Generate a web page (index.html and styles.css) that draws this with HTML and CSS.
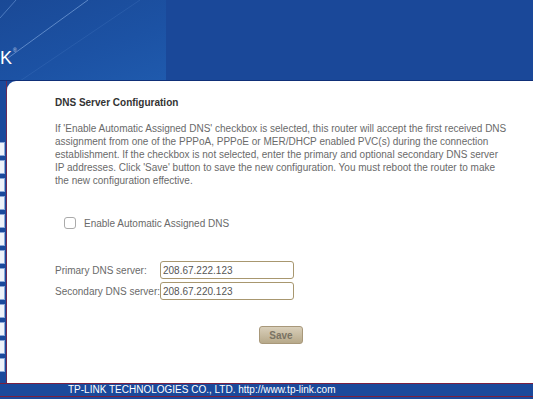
FILE: index.html
```html
<!DOCTYPE html>
<html lang="en">
<head>
    <meta charset="UTF-8">
    <title>DNS Server Configuration</title>
    <link rel="stylesheet" href="styles.css">
</head>
<body>
    <div class="header">
        <div class="logo">
            <svg class="swoosh" width="166" height="81" viewBox="0 0 166 81">
                <line x1="0" y1="18" x2="16" y2="0" stroke="#6f9ad8" stroke-width="1" opacity="0.6"/>
                <line x1="8" y1="58" x2="88" y2="0" stroke="#7aa3dc" stroke-width="1" opacity="0.7"/>
                <line x1="20" y1="81" x2="140" y2="0" stroke="#4f80c8" stroke-width="1" opacity="0.25"/>
            </svg>
            <span class="brand">K<sup>&reg;</sup></span>
        </div>
    </div>
    <div class="main">
        <div class="sidebar">
            <div class="item"></div><div class="item"></div><div class="item"></div>
            <div class="item"></div><div class="item"></div><div class="item"></div>
            <div class="item"></div><div class="item"></div><div class="item"></div>
            <div class="item"></div><div class="item"></div><div class="item"></div>
            <div class="item"></div>
        </div>
        <div class="panel">
            <h2>DNS Server Configuration</h2>
            <p class="info">If 'Enable Automatic Assigned DNS' checkbox is selected, this router will accept the first received DNS assignment from one of the PPPoA, PPPoE or MER/DHCP enabled PVC(s) during the connection establishment. If the checkbox is not selected, enter the primary and optional secondary DNS server IP addresses. Click 'Save' button to save the new configuration. You must reboot the router to make the new configuration effective.</p>
            <label class="check">
                <span class="box"></span>
                Enable Automatic Assigned DNS
            </label>
            <div class="fields">
                <div class="row">
                    <span class="name">Primary DNS server:</span>
                    <input type="text" value="208.67.222.123">
                </div>
                <div class="row">
                    <span class="name">Secondary DNS server:</span>
                    <input type="text" value="208.67.220.123">
                </div>
            </div>
            <div class="actions">
                <button type="button">Save</button>
            </div>
        </div>
    </div>
    <div class="footer">TP-LINK TECHNOLOGIES CO., LTD. http://www.tp-link.com</div>
</body>
</html>
```

FILE: styles.css
```css
body {
    margin: 0;
    background-color: #1b499b;
    font-family: "Liberation Sans", Arial, sans-serif;
    overflow: hidden;
}
.header {
    height: 81px;
    background-color: #1a4899;
    border-bottom: 1px solid #0f2f78;
    box-sizing: border-box;
}
.logo {
    position: relative;
    width: 166px;
    height: 80px;
    background: linear-gradient(160deg, #1a4996 0%, #1c52a4 60%, #1f5aad 100%);
    overflow: hidden;
}
.swoosh {
    position: absolute;
    left: 0;
    top: 0;
}
.brand {
    position: absolute;
    left: 0;
    top: 39px;
    color: #fff;
    font-size: 18px;
    line-height: 22px;
}
.brand sup {
    font-size: 5px;
    vertical-align: 12px;
    margin-left: 1px;
    color: #c8d6ee;
}
.main {
    display: flex;
    height: 302px;
}
.sidebar {
    width: 6px;
    padding-top: 61px;
    border-right: 1px solid #6b2a55;
}
.item {
    width: 4px;
    height: 12px;
    margin-bottom: 4px;
    background-color: #eef2fa;
    border: 1px solid #8aa6d8;
    border-left: none;
}
.panel {
    flex: 1;
    background-color: #fff;
    border-top-left-radius: 9px;
    padding: 16px 20px 0 48px;
    color: #6a6a6a;
    font-size: 10px;
}
h2 {
    margin: 0 0 14px 0;
    font-size: 10px;
    color: #333;
}
.info {
    margin: 0;
    line-height: 13px;
    width: 453px;
}
.check {
    display: flex;
    align-items: center;
    gap: 8px;
    height: 12px;
    margin: 30px 0 0 9px;
}
.box {
    width: 10px;
    height: 10px;
    border: 1px solid #aaa;
    border-radius: 3px;
    background: #fff;
}
.fields {
    margin-top: 31px;
}
.row {
    display: flex;
    align-items: center;
    height: 20px;
    margin-bottom: 1px;
}
.name {
    width: 105px;
    white-space: nowrap;
}
.row input {
    width: 134px;
    height: 18px;
    box-sizing: border-box;
    border: 1px solid #a8976f;
    border-radius: 3px;
    padding: 0 2px;
    font-family: "Liberation Sans", Arial, sans-serif;
    font-size: 10px;
    color: #555;
}
.actions {
    margin-top: 25px;
    padding-left: 204px;
}
.actions button {
    width: 44px;
    height: 18px;
    border: 1px solid #a8987a;
    border-radius: 3px;
    background: linear-gradient(#d9cfba, #b7a98a);
    color: #7a7364;
    font-family: "Liberation Sans", Arial, sans-serif;
    font-size: 10px;
    font-weight: bold;
    padding: 0;
}
.footer {
    height: 12px;
    border-top: 1px solid #7a2040;
    border-bottom: 1px solid #7a2040;
    background-color: #1b499b;
    color: #fff;
    font-size: 10px;
    line-height: 12px;
    padding-left: 68px;
}
```
